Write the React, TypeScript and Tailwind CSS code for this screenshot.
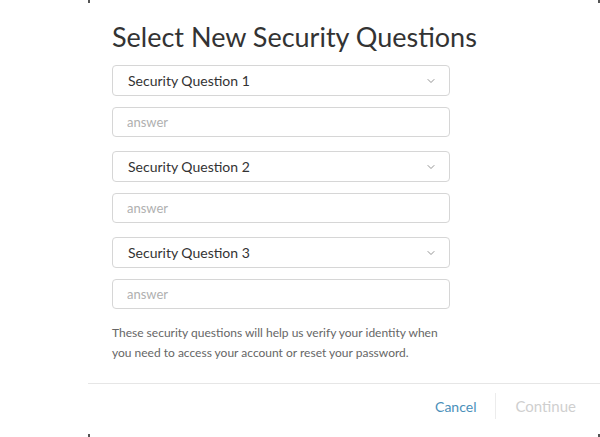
import { ChevronDown } from "lucide-react";

const questions = ["Security Question 1", "Security Question 2", "Security Question 3"];

function QuestionBlock({ label }: { label: string }) {
  return (
    <div className="flex flex-col gap-[11px]">
      <div className="flex h-[31px] items-center justify-between rounded-[4px] border border-[#d6d6d6] bg-white pl-[15px] pr-[12px]">
        <span className="text-[14px] text-[#333]">{label}</span>
        <ChevronDown className="mt-[1px] h-[12px] w-[12px] text-[#777]" strokeWidth={1.6} />
      </div>
      <input
        className="h-[30px] rounded-[4px] border border-[#d6d6d6] bg-white px-[14px] text-[13px] text-[#333] outline-none placeholder:text-[#b0b0b0]"
        placeholder="answer"
      />
    </div>
  );
}

export default function App() {
  return (
    <div
      className="relative h-[437px] w-[600px] overflow-hidden bg-white"
      style={{ fontFamily: "Lato, 'Open Sans', sans-serif" }}
    >
      <span className="absolute left-[88px] top-0 h-[3px] w-[2px] bg-[#555]" />
      <span className="absolute bottom-0 left-[88px] h-[3px] w-[2px] bg-[#555]" />
      <span className="absolute right-0 top-0 h-[3px] w-[2px] bg-[#555]" />
      <span className="absolute bottom-0 right-0 h-[3px] w-[2px] bg-[#555]" />

      <div className="flex h-full flex-col pl-[88px]">
        <div className="flex flex-col pl-[24px] pr-[150px]">
          <h1 className="whitespace-nowrap pt-[19px] text-[27px] leading-[36px] font-normal text-[#333]">
            Select New Security Questions
          </h1>
          <div className="mt-[10px] flex flex-col gap-[14px]">
            {questions.map((q) => (
              <QuestionBlock key={q} label={q} />
            ))}
          </div>
          <p className="mt-[14px] text-[12px] leading-[20px] text-[#666]">
            These security questions will help us verify your identity when
            <br />
            you need to access your account or reset your password.
          </p>
        </div>

        <div className="mt-[20px] border-t border-[#e6e6e6]" />

        <div className="flex items-center justify-end pt-[9px]">
          <button className="text-[14px] text-[#4a90ba]">Cancel</button>
          <span className="mx-[19px] h-[26px] w-px bg-[#ececec]" />
          <button className="pr-[24px] text-[15px] text-[#cfcfcf]">Continue</button>
        </div>
      </div>
    </div>
  );
}
